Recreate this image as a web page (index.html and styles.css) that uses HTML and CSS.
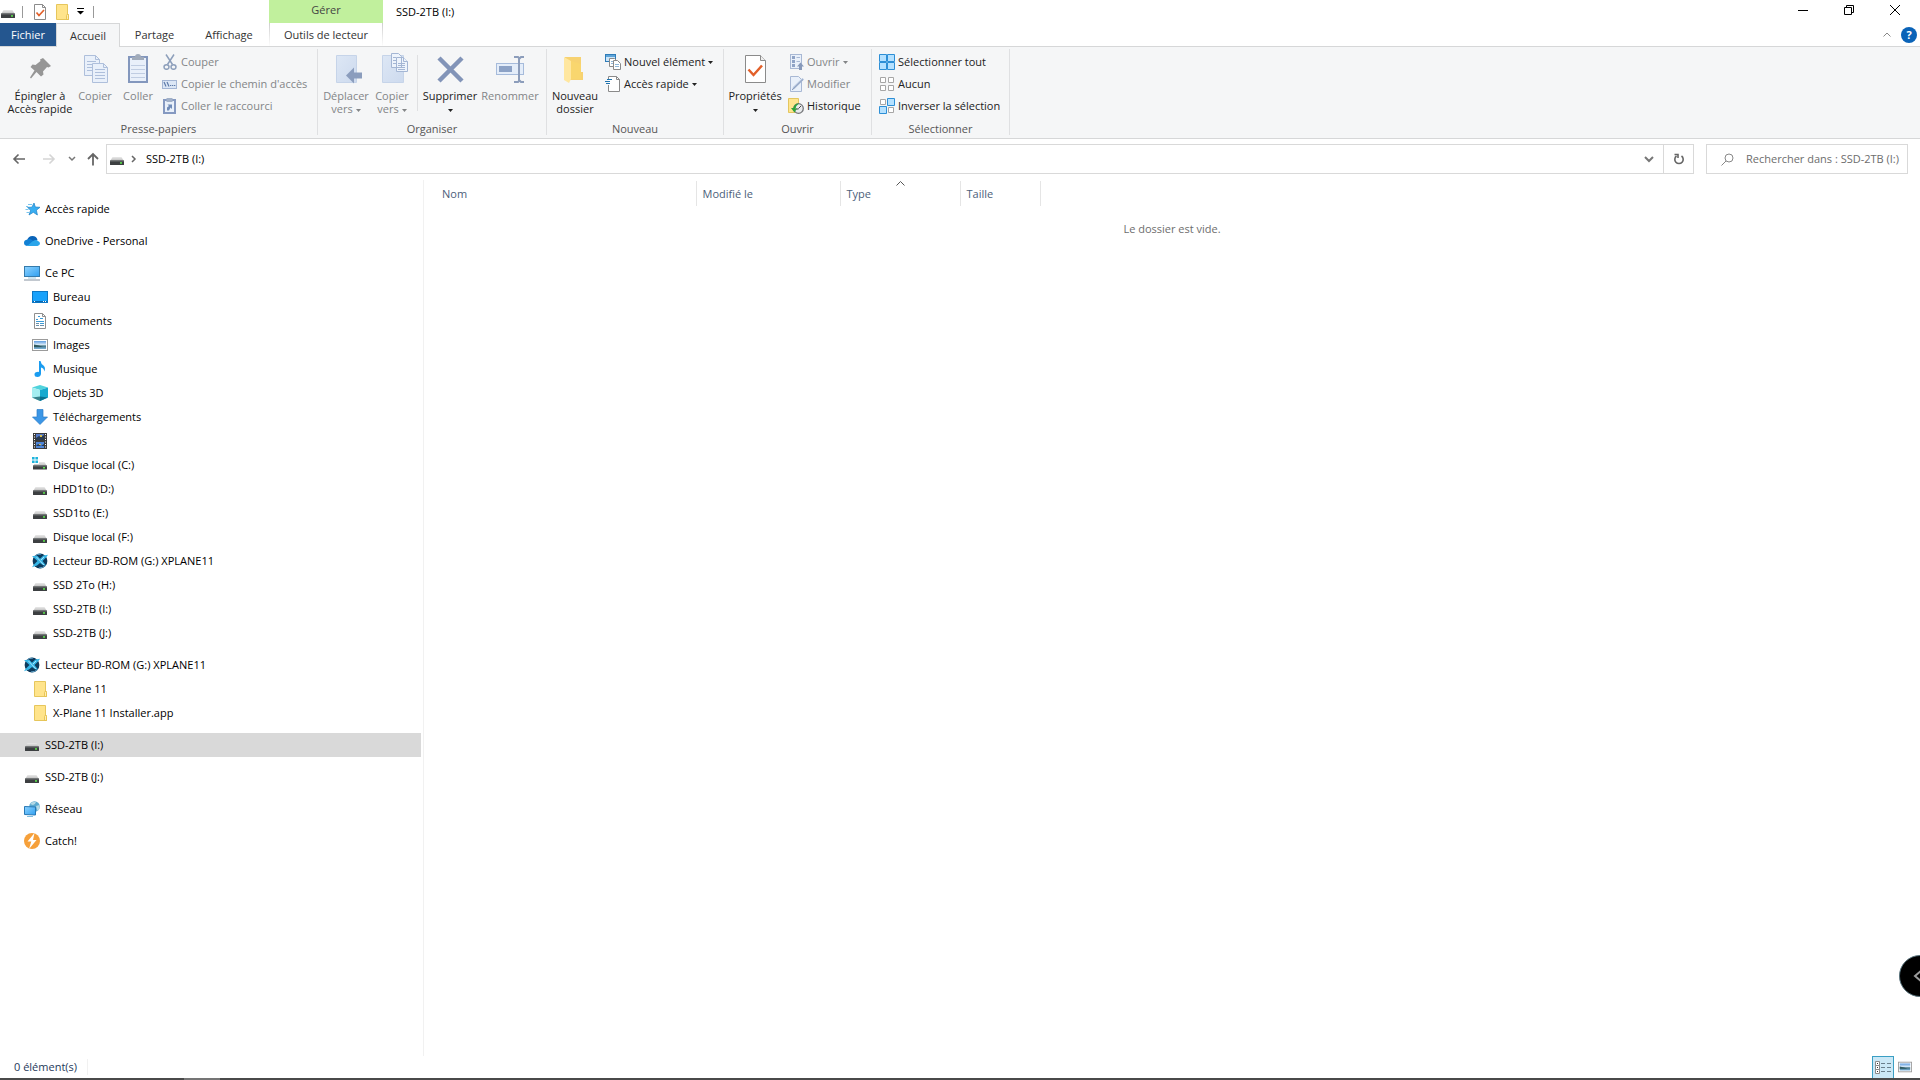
FILE: index.html
```html
<!DOCTYPE html>
<html lang="fr">
<head>
    <meta charset="UTF-8">
    <meta name="viewport" content="width=device-width, initial-scale=1.0">
    <title>SSD-2TB (I:)</title>
    <link rel="stylesheet" href="styles.css">
</head>
<body>

<!-- Shared icons -->
<svg class="sprite" aria-hidden="true">
    <defs>
        <linearGradient id="driveTop" x1="0" y1="0" x2="0" y2="1">
            <stop offset="0" stop-color="#e9e9e9"/>
            <stop offset="1" stop-color="#b9b9b9"/>
        </linearGradient>
        <linearGradient id="screen" x1="0" y1="0" x2="1" y2="1">
            <stop offset="0" stop-color="#8fd3ff"/>
            <stop offset="1" stop-color="#2f9ff0"/>
        </linearGradient>
        <linearGradient id="photo" x1="0" y1="0" x2="0" y2="1">
            <stop offset="0" stop-color="#5d9be0"/>
            <stop offset="0.5" stop-color="#e4f1fb"/>
            <stop offset="0.6" stop-color="#3d6f80"/>
            <stop offset="1" stop-color="#7fb4dc"/>
        </linearGradient>
        <linearGradient id="paper" x1="0" y1="0" x2="1" y2="1">
            <stop offset="0" stop-color="#dde7f5"/>
            <stop offset="1" stop-color="#cddaee"/>
        </linearGradient>
    </defs>
    <symbol id="drive" viewBox="0 0 16 16">
        <path d="M3.500 6h9l2.300 4H1.200z" fill="url(#driveTop)"/>
        <rect x="1" y="9.500" width="14" height="4.500" rx="0.600" fill="#3c3f41"/>
        <rect x="1" y="9.500" width="14" height="1" fill="#6b6e70"/>
        <rect x="11" y="11.200" width="2" height="1.500" fill="#5bea4c"/>
    </symbol>
    <symbol id="drive-win" viewBox="0 0 16 16">
        <path d="M0 0h2.600v2.600H0zM3.400 0H6v2.600H3.400zM0 3.400h2.600V6H0zM3.400 3.400H6V6H3.400z" fill="#1fb4dc"/>
        <path d="M7 5h5.500l2.300 4H1.200l1-2H7z" fill="url(#driveTop)"/>
        <rect x="1" y="8.500" width="14" height="4" rx="0.600" fill="#3c3f41"/>
        <rect x="1" y="8.500" width="14" height="1" fill="#6b6e70"/>
        <rect x="11" y="10" width="2" height="1.500" fill="#5bea4c"/>
    </symbol>
    <symbol id="folder" viewBox="0 0 16 16">
        <path d="M2.500 0.500h11v10h1v5h-12z" fill="#ffe48b" stroke="#e6c65c"/>
        <path d="M12.500 15.500v-4l1-1.500 1 1.500v4z" fill="#ffedb0" stroke="#e3bc45" stroke-width="0.800"/>
    </symbol>
    <symbol id="check-doc" viewBox="0 0 16 16">
        <path d="M2.500 0.500h8l3 3v12h-11z" fill="#fff" stroke="#8b8b8b"/>
        <path d="M10.500 0.500v3h3" fill="none" stroke="#8b8b8b"/>
        <path d="M4.500 8.500l2.500 3 5-5.500" fill="none" stroke="#e2602a" stroke-width="1.700"/>
    </symbol>
    <symbol id="xplane" viewBox="0 0 16 16">
        <circle cx="8" cy="8" r="7.400" fill="#0e3a5c"/>
        <path d="M2.500 3.500Q5 .8 9 1M13.500 12.500Q11 15 7 15" stroke="#62a6cc" fill="none"/>
        <path d="M0 3h5.500L8 5.800 11.500 2.500 16 1.800 14.500 4 10.500 8l3.500 4.500-3-.2L8 10l-3 2.500-5 1.800 1.500-2.300L5.500 8z" fill="#35b5e6"/>
        <path d="M4.500 4l7.500 8M12 4l-3 3" stroke="#c7eefc" stroke-width=".8"/>
    </symbol>
    <symbol id="monitor" viewBox="0 0 16 16">
        <rect x="0.500" y="1.500" width="15" height="10" fill="url(#screen)" stroke="#357bac"/>
        <path d="M4 13h8" stroke="#9ccbe2"/>
        <path d="M0 15h16" stroke="#8592a0"/>
    </symbol>
    <symbol id="picture" viewBox="0 0 16 16">
        <rect x="0.500" y="2.500" width="15" height="11" fill="#fff" stroke="#9b9b9b"/>
        <rect x="2" y="4" width="12" height="8" fill="url(#photo)"/>
        <path d="M2 7.500l5 1 4 1.500H2z" fill="#2f5a60"/>
    </symbol>
    <symbol id="caret" viewBox="0 0 5 3">
        <path d="M0 0h5L2.500 3z" fill="currentColor"/>
    </symbol>
</svg>

<header>
    <div class="titlebar">
        <div class="quick-access">
            <svg class="icon"><use href="#drive"/></svg>
            <span class="bar"></span>
            <button aria-label="Propriétés"><svg class="icon"><use href="#check-doc"/></svg></button>
            <button aria-label="Nouveau dossier"><svg class="icon"><use href="#folder"/></svg></button>
            <button aria-label="Personnaliser" class="customize">
                <svg width="7" height="7" viewBox="0 0 7 7"><path d="M0 .5h7" stroke="#000"/><path d="M0 3h7L3.500 6.500z" fill="#000"/></svg>
            </button>
            <span class="bar"></span>
        </div>
        <div class="context-label">Gérer</div>
        <h1>SSD-2TB (I:)</h1>
        <div class="window-controls">
            <button aria-label="Réduire"><svg width="10" height="10" viewBox="0 0 10 10"><path d="M0 5.500h10" stroke="#000"/></svg></button>
            <button aria-label="Restaurer"><svg width="10" height="10" viewBox="0 0 10 10" fill="none" stroke="#000"><path d="M.5 2.500h7v7h-7zM2.500 2.500v-2h7v7h-2"/></svg></button>
            <button aria-label="Fermer"><svg width="10" height="10" viewBox="0 0 10 10"><path d="M0 0l10 10M10 0L0 10" stroke="#000"/></svg></button>
        </div>
    </div>

    <div class="tabs">
        <button class="tab tab-file">Fichier</button>
        <button class="tab tab-home">Accueil</button>
        <button class="tab tab-share">Partage</button>
        <button class="tab tab-view">Affichage</button>
        <button class="tab tab-context">Outils de lecteur</button>
        <div class="tabs-end">
            <button aria-label="Réduire le ruban"><svg width="8" height="5" viewBox="0 0 8 5"><path d="M.5 4.500L4 1l3.500 3.500" fill="none" stroke="#888"/></svg></button>
            <button aria-label="Aide" class="help">?</button>
        </div>
    </div>

    <div class="ribbon">
        <section class="group clipboard">
            <div class="group-body">
                <button class="big">
                    <svg width="32" height="32" viewBox="0 0 32 32">
                        <path d="M19 5L27 13l-2.500 1.500-1.500-.5-4 4.500.5 3-2.500 2L12.500 19 7 25.500 6 24.500 10.500 17.500 6.500 14l2-2.500 3 .5 5-4-.5-1.500z" fill="#969696"/>
                    </svg>
                    <span>Épingler à<br>Accès rapide</span>
                </button>
                <button class="big" disabled>
                    <svg width="32" height="32" viewBox="0 0 32 32" fill="#e9f0fa" stroke="#aebfdb">
                        <path d="M5.500 2.500h11l4 4v16h-15z"/>
                        <path d="M16.500 2.500v4h4M8 8.500h9M8 11.500h9M8 14.500h9M8 17.500h9" fill="none"/>
                        <path d="M13.500 10.500h11l4 4v15h-15z"/>
                        <path d="M24.500 10.500v4h4M16 16.500h10M16 19.500h10M16 22.500h10M16 25.500h10" fill="none"/>
                    </svg>
                    <span>Copier</span>
                </button>
                <button class="big" disabled>
                    <svg width="32" height="32" viewBox="0 0 32 32">
                        <rect x="7" y="4" width="18" height="25" fill="#e9f0fa" stroke="#8397bd" stroke-width="2"/>
                        <path d="M9 12.500h14M9 16.500h14M9 20.500h14M9 24.500h14" stroke="#c0cde2"/>
                        <path d="M10 7V4h3q0-3 3-3t3 3h3v3z" fill="#a1abba"/>
                    </svg>
                    <span>Coller</span>
                </button>
                <div class="small-list">
                    <button class="small" disabled>
                        <svg class="icon" viewBox="0 0 16 16" fill="none" stroke="#8d9fbb" stroke-width="1.500">
                            <path d="M4 .5l6.500 10M12 .5l-6.500 10"/>
                            <ellipse cx="4.500" cy="13" rx="2.500" ry="2.300"/><ellipse cx="11.500" cy="13" rx="2.500" ry="2.300"/>
                        </svg>Couper
                    </button>
                    <button class="small" disabled>
                        <svg class="icon" viewBox="0 0 16 16">
                            <rect x="0.500" y="4.500" width="14" height="8" fill="#dbe6f5" stroke="#a3b5d4"/>
                            <path d="M2 6l2 4.500M5 6l2 4.500M8 9.500h1.300M10 9.500h1.300M12 9.500h1.300" stroke="#5e7aa8" stroke-width="1.200"/>
                        </svg>Copier le chemin d'accès
                    </button>
                    <button class="small" disabled>
                        <svg class="icon" viewBox="0 0 16 16">
                            <rect x="2" y="2" width="11" height="13" fill="#e9f0fa" stroke="#8599c1" stroke-width="2"/>
                            <path d="M4.500 0h6v4h-6z" fill="#a1b0c8"/>
                            <path d="M5 12.500V9.500l2-1.500-1.500-1.500H10V11L8.500 9.500 7 12.500z" fill="#6f8bb8"/>
                        </svg>Coller le raccourci
                    </button>
                </div>
            </div>
            <h2>Presse-papiers</h2>
        </section>

        <section class="group organize">
            <div class="group-body">
                <button class="big" disabled>
                    <svg width="32" height="32" viewBox="0 0 32 32">
                        <path d="M6.500 2.500h20v27h-20z" fill="url(#paper)" stroke="#c6d4e9"/>
                        <path d="M16 22.500l8-8v5h8v6h-8v5z" fill="#8b9dbd"/>
                    </svg>
                    <span>Déplacer<br>vers <svg class="caret"><use href="#caret"/></svg></span>
                </button>
                <button class="big" disabled>
                    <svg width="32" height="32" viewBox="0 0 32 32">
                        <path d="M6.500 2.500h21v27h-21z" fill="url(#paper)" stroke="#c6d4e9"/>
                        <g fill="#eef4fc" stroke="#a4b6d4">
                            <path d="M15.500.5h7l3 3v11h-10zM20.500 4.500h7l4 4v10h-11z"/>
                            <path d="M27.500 4.500v4h4M22 10.500h7M22 12.500h7M22 14.500h7M22 16.500h7M17 4.500h3M17 7.500h3M17 10.500h3"/>
                        </g>
                    </svg>
                    <span>Copier<br>vers <svg class="caret"><use href="#caret"/></svg></span>
                </button>
                <span class="divider"></span>
                <button class="big">
                    <svg width="32" height="32" viewBox="0 0 32 32"><path d="M5 5l23 23M28 5L5 28" stroke="#8294b8" stroke-width="4.500"/></svg>
                    <span>Supprimer<br><svg class="caret"><use href="#caret"/></svg></span>
                </button>
                <button class="big" disabled>
                    <svg width="32" height="32" viewBox="0 0 32 32">
                        <rect x="2.500" y="10.500" width="27" height="11" fill="#e4edf9" stroke="#a6bbdb"/>
                        <rect x="5" y="13" width="13" height="6" fill="#8ca2c6"/>
                        <path d="M20 4h4l1.500 1.500L27 4h3M20 29h4l1.500-1.500L27 29h3M25 5v23" fill="none" stroke="#8c9dbb" stroke-width="2"/>
                    </svg>
                    <span>Renommer</span>
                </button>
            </div>
            <h2>Organiser</h2>
        </section>

        <section class="group new">
            <div class="group-body">
                <button class="big">
                    <svg width="32" height="32" viewBox="0 0 32 32">
                        <path d="M6 4h16v15h2v8H6z" fill="#f7d271"/>
                        <path d="M5 4l7 4v18l-2 4-5-3z" fill="#ffe7a0"/>
                        <path d="M12 8v18h10V11z" fill="#f9d66e"/>
                    </svg>
                    <span>Nouveau<br>dossier</span>
                </button>
                <div class="small-list">
                    <button class="small">
                        <svg class="icon" viewBox="0 0 16 16">
                            <rect x="0.500" y="0.500" width="10" height="7" fill="#cbe6fa" stroke="#2f7cb8"/>
                            <path d="M1 1h9v2H1z" fill="#5ea4d8"/>
                            <path d="M4.500 4.500h5l2 2v6h-7z" fill="#fff" stroke="#8a8a8a"/>
                            <path d="M8.500 6.500h4l3 3v6h-7z" fill="#fff" stroke="#8a8a8a"/>
                            <path d="M10 10.500h4M10 12.500h4M6 7.500h2M6 9.500h2" stroke="#8fb7d8"/>
                        </svg>Nouvel élément <svg class="caret"><use href="#caret"/></svg>
                    </button>
                    <button class="small">
                        <svg class="icon" viewBox="0 0 16 16">
                            <path d="M3.500 4V.5h8l3 3v12h-11V9" fill="#fff" stroke="#8a8a8a"/>
                            <path d="M11.500.5v3h3" fill="none" stroke="#8a8a8a"/>
                            <path d="M2 3.500h5M0 5.500h5M1 7.500h4" stroke="#1f73ae" stroke-width="1.200"/>
                        </svg>Accès rapide <svg class="caret"><use href="#caret"/></svg>
                    </button>
                </div>
            </div>
            <h2>Nouveau</h2>
        </section>

        <section class="group open">
            <div class="group-body">
                <button class="big">
                    <svg width="32" height="32" viewBox="0 0 32 32">
                        <path d="M6.500 2.500h15l5 5v22h-20z" fill="#fff" stroke="#8b8b8b"/>
                        <path d="M21.500 2.500v5h5" fill="#eee" stroke="#8b8b8b"/>
                        <path d="M9.500 16.500l5 5.500 8.500-9.500" fill="none" stroke="#e2602a" stroke-width="2.500"/>
                    </svg>
                    <span>Propriétés<br><svg class="caret"><use href="#caret"/></svg></span>
                </button>
                <div class="small-list">
                    <button class="small" disabled>
                        <svg class="icon" viewBox="0 0 16 16">
                            <rect x="2.500" y="0.500" width="11" height="14" fill="#e9f0fa" stroke="#a8b8d4"/>
                            <path d="M4 2h3v3H4zM4 6h3v3H4zM4 10h3v3H4z" fill="#8fa3c6"/>
                            <path d="M8.500 3.500H12M8.500 7.500H12" stroke="#a8b8d4"/>
                            <path d="M12.500 8.500l3.500 4h-2V16h-3v-3.500H9z" fill="#8799ba"/>
                        </svg>Ouvrir <svg class="caret"><use href="#caret"/></svg>
                    </button>
                    <button class="small" disabled>
                        <svg class="icon" viewBox="0 0 16 16">
                            <path d="M2.500.5h8l3 3v12h-11z" fill="#e9f0fa" stroke="#a8b8d4"/>
                            <path d="M4 14l1-3 9.500-9L16 3.500 6.500 13z" fill="#b4c4dd"/>
                            <path d="M4 14l11-10.500" stroke="#8c9fc0"/>
                        </svg>Modifier
                    </button>
                    <button class="small">
                        <svg class="icon" viewBox="0 0 16 16">
                            <path d="M.5.5h10v14H.5z" fill="#ffe58f" stroke="#e3c65f"/>
                            <circle cx="10.500" cy="10.500" r="4.800" fill="#e8eaec" stroke="#77797c" stroke-width="1.300"/>
                            <path d="M10.500 10.500l2.500-2.500M8 11h2.500" stroke="#444"/>
                            <path d="M11 5.500q-5 0-5.500 4.500H3l3.500 4.500L9 10.500H7.500Q8 7.500 11 5.500z" fill="#2fa33a"/>
                        </svg>Historique
                    </button>
                </div>
            </div>
            <h2>Ouvrir</h2>
        </section>

        <section class="group select">
            <div class="group-body">
                <div class="small-list">
                    <button class="small">
                        <svg class="icon" viewBox="0 0 16 16"><path d="M.5.5h7v7h-7zM8.500.5h7v7h-7zM.5 8.500h7v7h-7zM8.500 8.500h7v7h-7z" fill="#b5e1ff" stroke="#2d8fd6"/></svg>Sélectionner tout
                    </button>
                    <button class="small">
                        <svg class="icon" viewBox="0 0 16 16"><path d="M1.500 1.500h5v5h-5zM9.500 1.500h5v5h-5zM1.500 9.500h5v5h-5zM9.500 9.500h5v5h-5z" fill="#fff" stroke="#a6a6a6"/></svg>Aucun
                    </button>
                    <button class="small">
                        <svg class="icon" viewBox="0 0 16 16"><path d="M1.500 1.500h5v5h-5zM9.500 9.500h5v5h-5z" fill="#fff" stroke="#a6a6a6"/><path d="M8.500.5h7v7h-7zM.5 8.500h7v7h-7z" fill="#b5e1ff" stroke="#2d8fd6"/></svg>Inverser la sélection
                    </button>
                </div>
            </div>
            <h2>Sélectionner</h2>
        </section>
    </div>

    <div class="address-row">
        <div class="history">
            <button aria-label="Précédent"><svg class="icon" viewBox="0 0 16 16" fill="none" stroke="#666" stroke-width="1.600"><path d="M14 8H3M7.500 3.500L3 8l4.500 4.500"/></svg></button>
            <button aria-label="Suivant" disabled><svg class="icon" viewBox="0 0 16 16" fill="none" stroke="#d5d5d5" stroke-width="1.600"><path d="M2 8h11M8.500 3.500L13 8l-4.500 4.500"/></svg></button>
            <button aria-label="Emplacements récents"><svg width="8" height="8" viewBox="0 0 8 8" fill="none" stroke="#777" stroke-width="1.500"><path d="M1 2l3 3 3-3"/></svg></button>
            <button aria-label="Dossier parent"><svg class="icon" viewBox="0 0 16 16" fill="none" stroke="#666" stroke-width="1.800"><path d="M8 14.500V3M3 8l5-5 5 5"/></svg></button>
        </div>
        <div class="address">
            <svg class="icon"><use href="#drive"/></svg>
            <svg class="crumb-arrow" width="6" height="8" viewBox="0 0 6 8" fill="none" stroke="#666" stroke-width="1.500"><path d="M1 1l3 3-3 3"/></svg>
            <a href="#">SSD-2TB (I:)</a>
            <button class="expand" aria-label="Emplacements précédents"><svg width="10" height="8" viewBox="0 0 10 8" fill="none" stroke="#777" stroke-width="2"><path d="M1 2l4 4 4-4"/></svg></button>
            <button class="refresh" aria-label="Actualiser"><svg width="12" height="12" viewBox="0 0 12 12" fill="none" stroke="#666" stroke-width="1.600"><path d="M8.500 3A4.200 4.200 0 1 1 3.500 3"/><path d="M1.500 1.500H5V5"/></svg></button>
        </div>
        <div class="search">
            <svg width="13" height="13" viewBox="0 0 13 13" fill="none" stroke="#888"><circle cx="8" cy="5" r="4"/><path d="M5 8L.5 12.500"/></svg>
            <input type="text" aria-label="Rechercher" placeholder="Rechercher dans : SSD-2TB (I:)">
        </div>
    </div>
</header>

<main>
    <nav aria-label="Volet de navigation">
        <ul class="tree">
            <li><a href="#">
                <svg class="icon" viewBox="0 0 16 16"><path d="M10 2l1.300 4 4.700.3-3.600 2.900 1 4.800L9.300 11.300 5 14l1.600-4.700L3.500 6.300l4.400-.1z" fill="#38aef2" stroke="#1e7fc4" stroke-width=".7"/><path d="M4 3.500h4M2 5.500h2M1.500 8.500h3M2.500 11.500H5" stroke="#79c6ee"/></svg>
                Accès rapide</a></li>
            <li><a href="#">
                <svg class="icon" viewBox="0 0 16 16"><path d="M3 8q1-5 5.500-5 4 0 5 4l-5 3z" fill="#0a63b8"/><path d="M3.500 6.500q2-1 4 .3L11 9l-8 4Q0 12.500 0 9.800 0 7 3.500 6.500z" fill="#1280d4"/><path d="M3 13l6-5q3-2 5 0 2 .6 2 2.600T13.500 13z" fill="#2aa5ea"/></svg>
                OneDrive - Personal</a></li>
            <li><a href="#"><svg class="icon"><use href="#monitor"/></svg>Ce PC</a>
                <ul>
                    <li><a href="#">
                        <svg class="icon" viewBox="0 0 16 16"><rect x="0.500" y="2.500" width="15" height="11" fill="#19a2fb" stroke="#0c78c6"/><path d="M1 12.500h14" stroke="#0b65ab"/><path d="M2 12.500h1M11 12.500h1M13 12.500h1" stroke="#fff"/></svg>
                        Bureau</a></li>
                    <li><a href="#">
                        <svg class="icon" viewBox="0 0 16 16"><path d="M2.500.5h8l3 3v12h-11z" fill="#fff" stroke="#8f8f8f"/><path d="M10.500.5v3h3" fill="none" stroke="#8f8f8f"/><path d="M4 6.500h2M8 5.500h3M4 8.500h8M8 10.500h4M6 3.500h2" stroke="#3c9bd6" stroke-width="1.200"/><path d="M4 10.500h3M4 12.500h3M8 12.500h4" stroke="#6b8fa8" stroke-width="1.200"/></svg>
                        Documents</a></li>
                    <li><a href="#"><svg class="icon"><use href="#picture"/></svg>Images</a></li>
                    <li><a href="#">
                        <svg class="icon" viewBox="0 0 16 16"><path d="M7 0h1.500q.5 3 3 4.500 2.500 2 .8 6-.3-3.500-3.300-4V13q-.5 3-3.500 3T2.500 13.500 5 11q1-.3 2 0z" fill="#1a9cf0"/></svg>
                        Musique</a></li>
                    <li><a href="#">
                        <svg class="icon" viewBox="0 0 16 16"><path d="M8 0l8 2.500L8 5 0 2.500z" fill="#50d3dc"/><path d="M0 2.500L8 5v11l-8-3.500z" fill="#a4edf0"/><path d="M16 2.500L8 5v11l8-3.500z" fill="#16a9cf"/><path d="M8 11.500l-8 1L8 16z" fill="#37828c"/><path d="M8 11.500l8 1L8 16z" fill="#08708f"/></svg>
                        Objets 3D</a></li>
                    <li><a href="#">
                        <svg class="icon" viewBox="0 0 16 16"><path d="M5 .5h6V8h4.500L8 15.500.5 8H5z" fill="#3b96e6" stroke="#2c7dc6" stroke-width=".7"/></svg>
                        Téléchargements</a></li>
                    <li><a href="#">
                        <svg class="icon" viewBox="0 0 16 16"><rect x="1" width="14" height="16" fill="#3c3c3c"/><path d="M2.500 1v15M13.500 1v15" stroke="#fff" stroke-dasharray="1 1.500"/><rect x="4" y="1" width="8" height="6" fill="#5479c6"/><rect x="4" y="9" width="8" height="6" fill="#4f86d8"/><path d="M4 5l3-2 2 1 3-2v5H4zM4 13l2-2 3 2 3-2v2z" fill="#283a50"/><path d="M8 2h2v2H8zM7 11h2v1H7z" fill="#d5bd4d"/></svg>
                        Vidéos</a></li>
                    <li><a href="#"><svg class="icon"><use href="#drive-win"/></svg>Disque local (C:)</a></li>
                    <li><a href="#"><svg class="icon"><use href="#drive"/></svg>HDD1to (D:)</a></li>
                    <li><a href="#"><svg class="icon"><use href="#drive"/></svg>SSD1to (E:)</a></li>
                    <li><a href="#"><svg class="icon"><use href="#drive"/></svg>Disque local (F:)</a></li>
                    <li><a href="#"><svg class="icon"><use href="#xplane"/></svg>Lecteur BD-ROM (G:) XPLANE11</a></li>
                    <li><a href="#"><svg class="icon"><use href="#drive"/></svg>SSD 2To (H:)</a></li>
                    <li><a href="#"><svg class="icon"><use href="#drive"/></svg>SSD-2TB (I:)</a></li>
                    <li><a href="#"><svg class="icon"><use href="#drive"/></svg>SSD-2TB (J:)</a></li>
                </ul>
            </li>
            <li><a href="#"><svg class="icon"><use href="#xplane"/></svg>Lecteur BD-ROM (G:) XPLANE11</a>
                <ul>
                    <li><a href="#"><svg class="icon"><use href="#folder"/></svg>X-Plane 11</a></li>
                    <li><a href="#"><svg class="icon"><use href="#folder"/></svg>X-Plane 11 Installer.app</a></li>
                </ul>
            </li>
            <li><a href="#" class="selected" aria-current="page"><svg class="icon"><use href="#drive"/></svg>SSD-2TB (I:)</a></li>
            <li><a href="#"><svg class="icon"><use href="#drive"/></svg>SSD-2TB (J:)</a></li>
            <li><a href="#">
                <svg class="icon" viewBox="0 0 16 16"><circle cx="10.500" cy="5.500" r="5.300" fill="#5ba9cf"/><path d="M6 3q3-3 6-2-1 3-3 3zM12 5l3.500-1q.5 4-2 6z" fill="#b5d9e6"/><path d="M.5 5.500l11 .5v8l-11-.5z" fill="url(#screen)" stroke="#2878b5"/><path d="M3 15.500h6" stroke="#82bedd"/></svg>
                Réseau</a></li>
            <li><a href="#">
                <svg class="icon" viewBox="0 0 16 16"><circle cx="8" cy="8" r="8" fill="#f6a03a"/><path d="M10.500 0L3.500 8.500h3.800L5 16l7.500-9H9z" fill="#fff"/></svg>
                Catch!</a></li>
        </ul>
    </nav>

    <div class="content">
        <table>
            <thead>
                <tr>
                    <th class="col-name">Nom</th>
                    <th class="col-date">Modifié le</th>
                    <th class="col-type" aria-sort="ascending">Type
                        <svg class="sort" width="9" height="5" viewBox="0 0 9 5"><path d="M.5 4.500l4-4 4 4" fill="none" stroke="#555"/></svg>
                    </th>
                    <th class="col-size">Taille</th>
                    <th class="col-rest" aria-hidden="true"></th>
                </tr>
            </thead>
            <tbody>
                <tr><td colspan="5">Le dossier est vide.</td></tr>
            </tbody>
        </table>
    </div>
</main>

<footer>
    <span class="count">0 élément(s)</span>
    <div class="views">
        <button class="active" aria-label="Détails">
            <svg width="16" height="14" viewBox="0 0 16 14" fill="none"><path d="M.5.500h4v4h-4zM.5 4.500h4v4h-4zM.5 8.500h4v4h-4z" fill="#fff" stroke="#8b8b8b"/><path d="M2 2.500h1M2 6.500h1M2 10.500h1" stroke="#333"/><path d="M6 2.500h4M12 2.500h4M6 6.500h4M12 6.500h4M6 10.500h4M12 10.500h4" stroke="#6a7f8c"/></svg>
        </button>
        <button aria-label="Grandes icônes"><svg width="14" height="14" viewBox="0 0 16 16"><use href="#picture"/></svg></button>
    </div>
</footer>
<div class="taskbar-edge"><span></span></div>

<button class="side-handle" aria-label="Ouvrir le panneau">
    <svg width="10" height="14" viewBox="0 0 10 14" fill="none" stroke="#9b9b9b" stroke-width="2"><path d="M9 1L2 7l7 6"/></svg>
</button>

</body>
</html>
```
FILE: styles.css
```css
* {
    box-sizing: border-box;
}

body {
    display: flex;
    flex-direction: column;
    height: 100vh;
    margin: 0;
    overflow: hidden;
    background-color: #fff;
    color: #000;
    font-family: "Open Sans", "Noto Sans", sans-serif;
    font-size: 11px;
    line-height: 16px;
}

button {
    display: flex;
    align-items: center;
    justify-content: center;
    margin: 0;
    padding: 0;
    border: none;
    background: none;
    color: inherit;
    font: inherit;
}

a {
    color: inherit;
    text-decoration: none;
}

h1, h2 {
    margin: 0;
    font-size: 11px;
    font-weight: normal;
}

ul {
    margin: 0;
    padding: 0;
    list-style: none;
}

.sprite {
    position: absolute;
    width: 0;
    height: 0;
}

.icon {
    flex: none;
    width: 16px;
    height: 16px;
}

.caret {
    width: 5px;
    height: 3px;
    vertical-align: middle;
}

/* Title bar */
.titlebar {
    display: flex;
    height: 23px;
}

.quick-access {
    display: flex;
    align-items: center;
    width: 269px;
}

.quick-access .bar {
    width: 1px;
    height: 12px;
    margin: 0 6px;
    background-color: #999;
}

.quick-access button {
    width: 22px;
}

.quick-access .customize {
    width: 14px;
}

.context-label {
    width: 114px;
    padding-top: 2px;
    background-color: #c1f09d;
    color: #444;
    text-align: center;
}

.titlebar h1 {
    flex: 1;
    padding: 4px 13px;
}

.window-controls {
    display: flex;
    padding-right: 2px;
}

.window-controls button {
    width: 46px;
    height: 20px;
}

/* Ribbon tabs */
.tabs {
    display: flex;
    height: 24px;
    border-bottom: 1px solid #d6d7d8;
}

.tab {
    height: 23px;
    color: #333;
}

.tab-file {
    width: 56px;
    background-color: #24568f;
    color: #fff;
}

.tab-home {
    width: 64px;
    height: 24px;
    border: 1px solid #d6d7d8;
    border-bottom: none;
    background-color: #f5f6f7;
}

.tab-share {
    width: 69px;
}

.tab-view {
    width: 80px;
}

.tab-context {
    width: 114px;
    border: solid;
    border-width: 0 1px;
    border-image: linear-gradient(#ccc, #fff) 1;
}

.tabs-end {
    display: flex;
    flex: 1;
    align-items: center;
    justify-content: flex-end;
    gap: 10px;
    padding-right: 3px;
}

.help {
    width: 16px;
    height: 16px;
    border-radius: 50%;
    background-color: #0a63b8;
    color: #fff;
    font-weight: bold;
}

/* Ribbon */
.ribbon {
    display: flex;
    height: 92px;
    border-bottom: 1px solid #d6d7d8;
    background-color: #f5f6f7;
    color: #222;
}

.group {
    display: flex;
    flex-direction: column;
    margin: 2px 0 3px;
    border-right: 1px solid #dfe0e2;
}

.group h2 {
    color: #555;
    line-height: 12px;
    text-align: center;
}

.group-body {
    display: grid;
    flex: 1;
    padding: 2px 4px 0;
}

.clipboard {
    width: 318px;
}

.clipboard .group-body {
    grid-template-columns: 72px 38px 48px 1fr;
}

.organize {
    width: 229px;
}

.organize .group-body {
    grid-template-columns: 48px 44px 6px 60px 60px;
}

.new {
    width: 177px;
}

.new .group-body {
    grid-template-columns: 48px 1fr;
    column-gap: 6px;
}

.open {
    width: 148px;
}

.open .group-body {
    grid-template-columns: 54px 1fr;
    column-gap: 6px;
}

.select {
    width: 138px;
}

.select .group-body {
    padding-left: 7px;
}

.big {
    flex-direction: column;
    justify-content: flex-start;
    padding-top: 2px;
    line-height: 13px;
    white-space: nowrap;
}

.big > svg {
    flex: none;
    margin-bottom: 4px;
}

.small {
    gap: 3px;
    height: 22px;
    white-space: nowrap;
}

.big:disabled,
.small:disabled {
    color: #838587;
}

.divider {
    width: 1px;
    height: 56px;
    margin: 4px auto 0;
    background-color: #dfe0e2;
}

/* Address bar */
.address-row {
    display: flex;
    align-items: center;
    height: 41px;
    padding: 0 12px 1px 0;
}

.history {
    display: grid;
    grid-template-columns: 28px 32px 14px 27px;
    width: 106px;
    padding-left: 5px;
}

.address {
    display: flex;
    flex: 1;
    align-items: center;
    height: 30px;
    padding-left: 2px;
    border: 1px solid #d9d9d9;
}

.crumb-arrow {
    margin: 0 9px 0 6px;
}

.address a {
    flex: 1;
}

.expand {
    width: 28px;
    height: 28px;
}

.refresh {
    width: 30px;
    height: 28px;
    border-left: 1px solid #d9d9d9;
}

.search {
    display: flex;
    align-items: center;
    gap: 12px;
    width: 202px;
    height: 30px;
    margin-left: 12px;
    padding-left: 14px;
    border: 1px solid #d9d9d9;
}

.search input {
    flex: 1;
    min-width: 0;
    padding: 0;
    border: none;
    outline: none;
    background: none;
    font: inherit;
}

.search input::placeholder {
    color: #6d6d6d;
}

/* Navigation pane */
main {
    display: flex;
    flex: 1;
    min-height: 0;
}

nav {
    width: 424px;
    padding: 17px 2px 0 0;
    border-right: 1px solid #f1f1f1;
}

.tree > li {
    margin-bottom: 8px;
}

.tree a {
    display: flex;
    align-items: center;
    gap: 5px;
    height: 24px;
    padding-left: 24px;
}

.tree ul a {
    padding-left: 32px;
}

.tree .selected {
    background-color: #d9d9d9;
}

/* File list */
.content {
    flex: 1;
    padding-top: 1px;
}

table {
    width: 100%;
    border-collapse: collapse;
    table-layout: fixed;
}

th {
    position: relative;
    height: 25px;
    padding: 0 0 0 6px;
    border-right: 1px solid #e5e5e5;
    color: #4c607a;
    font-weight: normal;
    text-align: left;
}

.col-name {
    width: 272px;
    padding-left: 18px;
}

.col-date {
    width: 144px;
}

.col-type {
    width: 120px;
}

.col-size {
    width: 80px;
}

.col-rest {
    width: auto;
    border-right: none;
}

.sort {
    position: absolute;
    top: 0;
    right: 0;
    left: 0;
    margin: 0 auto;
}

td {
    height: 46px;
    padding: 0;
    color: #6d6d6d;
    text-align: center;
}

/* Status bar */
footer {
    display: flex;
    align-items: center;
    justify-content: space-between;
    height: 22px;
    padding: 0 4px 0 14px;
    color: #1e395b;
}

.count {
    padding-right: 10px;
    border-right: 1px solid #f1f1f1;
}

.views {
    display: flex;
}

.views button {
    width: 22px;
    height: 22px;
}

.views .active {
    border: 1px solid #3a9fc4;
    border-bottom: none;
    background-color: #cbe8f6;
}

.taskbar-edge {
    height: 2px;
    padding-left: 184px;
    background-color: #4a4a4a;
}

.taskbar-edge span {
    display: block;
    width: 36px;
    height: 2px;
    background-color: #757575;
}

/* Round handle that hangs over the right edge of the screen */
.side-handle {
    position: fixed;
    right: -21px;
    bottom: 83px;
    justify-content: flex-start;
    width: 42px;
    height: 42px;
    padding-left: 13px;
    border: 1px solid #55707a;
    border-radius: 50%;
    background-color: #000;
}
```
